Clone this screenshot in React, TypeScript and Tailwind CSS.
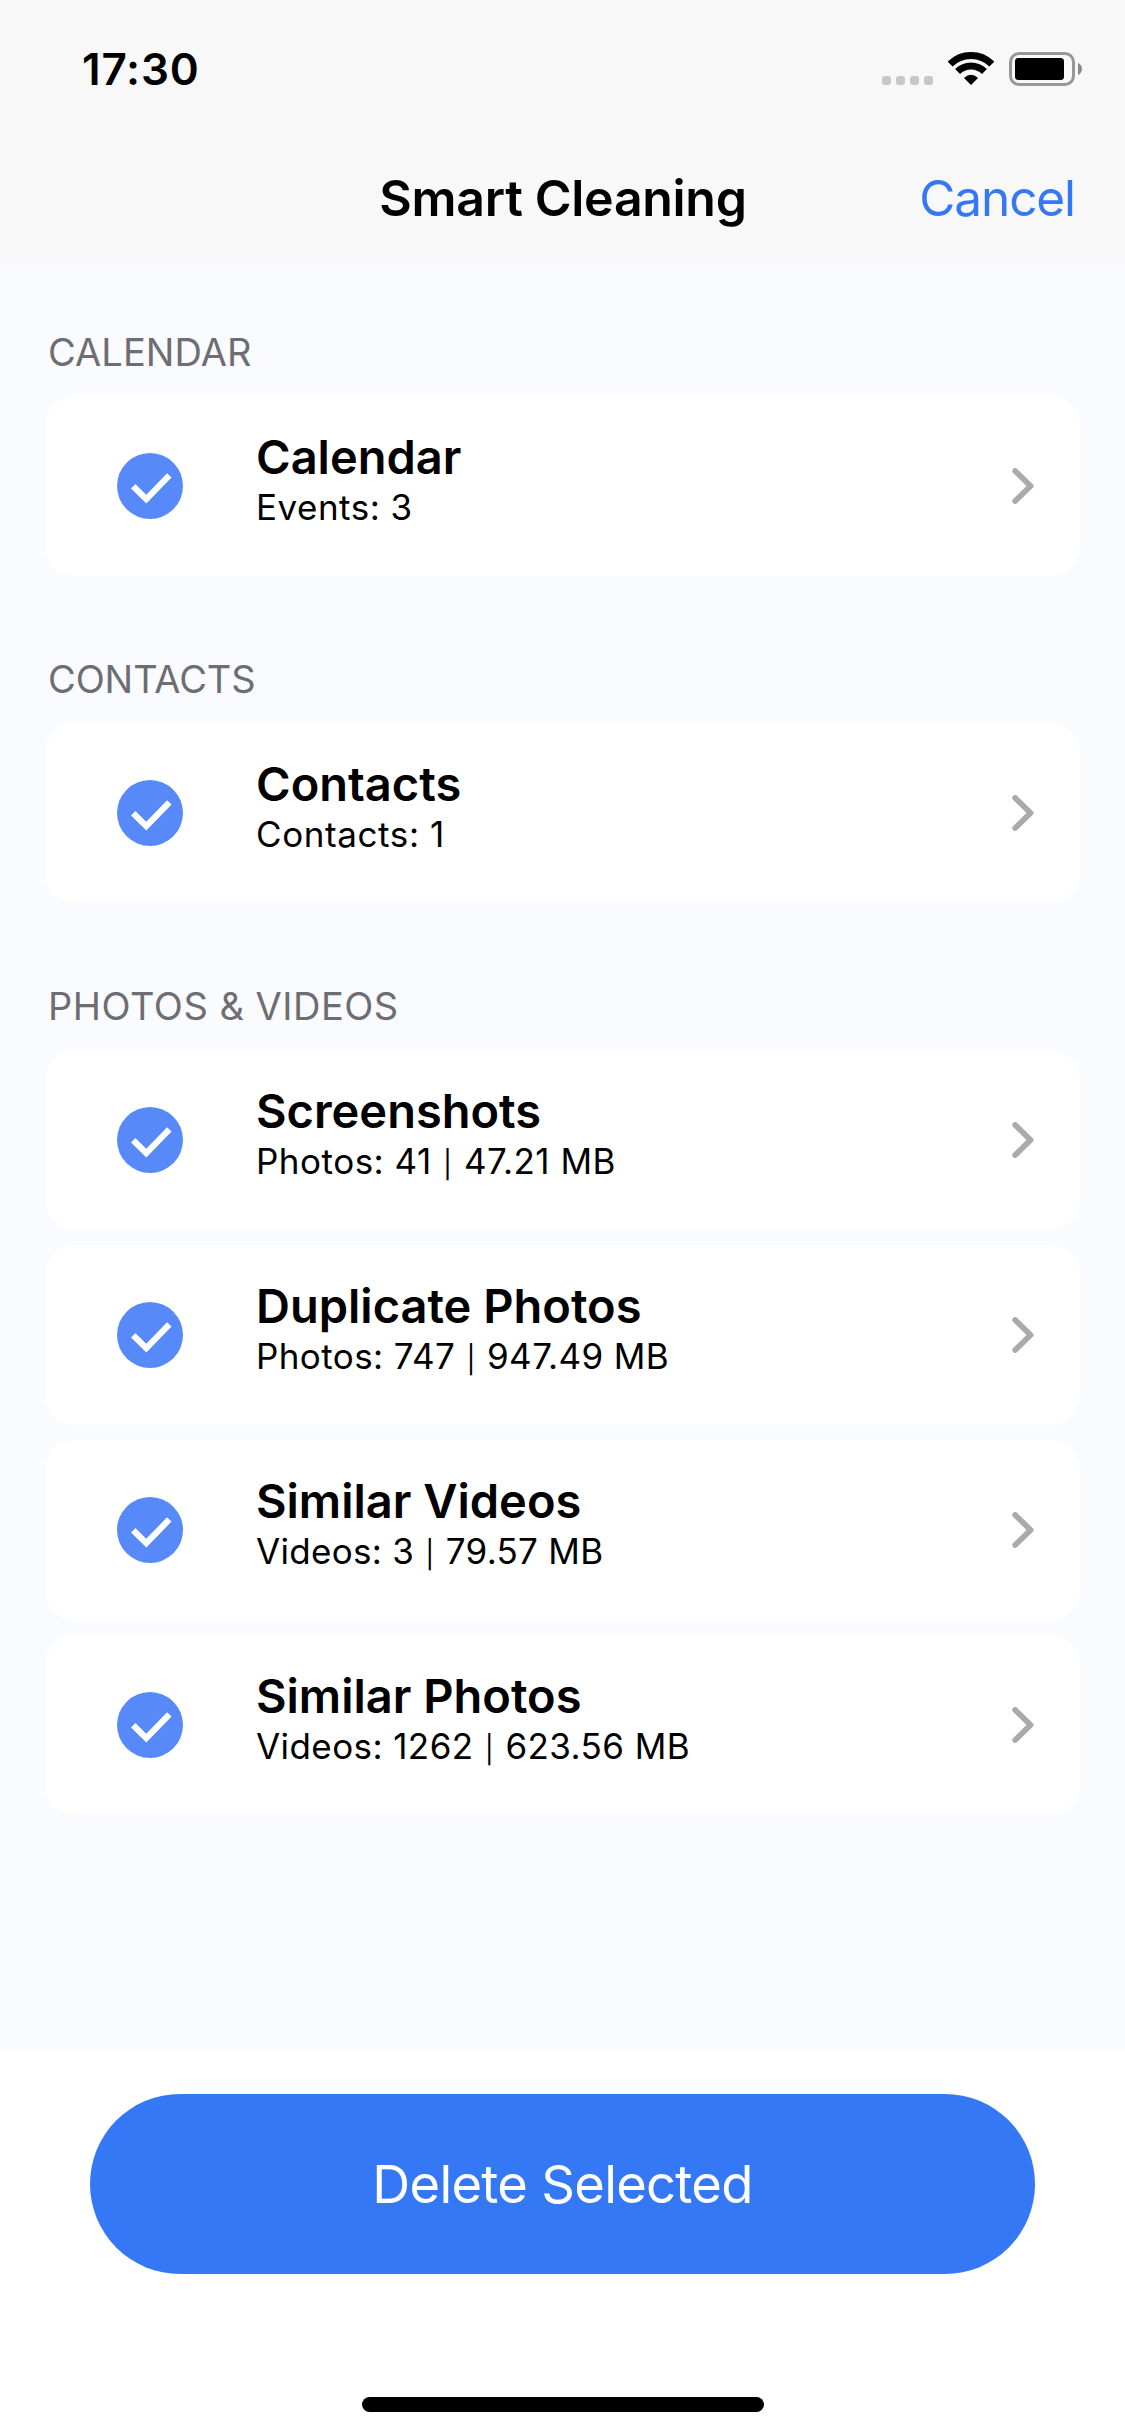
type Item = { title: string; detail: string[]; detailTracking: string };
type Section = { label: string; tracking: string; items: Item[] };

const sections: Section[] = [
  {
    label: "CALENDAR",
    tracking: "tracking-[0.07px]",
    items: [{ title: "Calendar", detail: ["Events: 3"], detailTracking: "tracking-[0.5px]" }],
  },
  {
    label: "CONTACTS",
    tracking: "tracking-[-0.1px]",
    items: [{ title: "Contacts", detail: ["Contacts: 1"], detailTracking: "tracking-[0.6px]" }],
  },
  {
    label: "PHOTOS & VIDEOS",
    tracking: "tracking-[0.5px]",
    items: [
      { title: "Screenshots", detail: ["Photos: 41", "47.21 MB"], detailTracking: "tracking-[0.5px]" },
      { title: "Duplicate Photos", detail: ["Photos: 747", "947.49 MB"], detailTracking: "tracking-[0.4px]" },
      { title: "Similar Videos", detail: ["Videos: 3", "79.57 MB"], detailTracking: "tracking-[0.3px]" },
      { title: "Similar Photos", detail: ["Videos: 1262", "623.56 MB"], detailTracking: "tracking-[0.42px]" },
    ],
  },
];

function WifiIcon() {
  return (
    <svg width="46" height="34" viewBox="0 0 46 34" fill="none">
      <path d="M2.14 12.14A29.5 29.5 0 0 1 43.86 12.14" stroke="#000" strokeWidth="7" />
      <path d="M9.56 19.56A19 19 0 0 1 36.44 19.56" stroke="#000" strokeWidth="7" />
      <path d="M23 33L16 26Q23 19.5 30 26Z" fill="#000" />
    </svg>
  );
}

function BatteryIcon() {
  return (
    <svg width="74" height="34" viewBox="0 0 74 34" fill="none">
      <rect x="1.5" y="1.5" width="63" height="31" rx="8.5" stroke="#979797" strokeWidth="3" />
      <rect x="6" y="6" width="49" height="22" rx="3.5" fill="#000" />
      <path d="M69 11C74.3 13 74.3 21 69 23Z" fill="#8a8a8a" />
    </svg>
  );
}

function CheckIcon() {
  return (
    <svg className="shrink-0" width="66" height="66" viewBox="0 0 66 66" fill="none">
      <circle cx="33" cy="33" r="33" fill="#5789f9" />
      <path d="M16.2 33.3L29.3 46.2L52.3 22.4" stroke="#fff" strokeWidth="6.2" />
    </svg>
  );
}

function ChevronIcon() {
  return (
    <svg className="shrink-0" width="22" height="36" viewBox="0 0 22 36" fill="none">
      <path
        d="M3.2 3L18.6 18L3.2 33"
        stroke="#aaaaaa"
        strokeWidth="5.8"
        strokeLinecap="round"
        strokeLinejoin="round"
      />
    </svg>
  );
}

function StatusBar() {
  return (
    <div className="flex h-[138px] items-center justify-between pl-[82px] pr-[42px]">
      <span className="text-[44px] leading-[48px] font-semibold tracking-[0.8px] text-black">17:30</span>
      <div className="flex h-[34px] items-end">
        <div className="mr-[15px] mb-px flex gap-[5px]">
          <span className="size-[9px] rounded-[3px] bg-[#c7c7c8]" />
          <span className="size-[9px] rounded-[3px] bg-[#c7c7c8]" />
          <span className="size-[9px] rounded-[3px] bg-[#c7c7c8]" />
          <span className="size-[9px] rounded-[3px] bg-[#c7c7c8]" />
        </div>
        <div className="mr-[15px]">
          <WifiIcon />
        </div>
        <BatteryIcon />
      </div>
    </div>
  );
}

function Row({ item }: { item: Item }) {
  const [count, size] = item.detail;
  return (
    <div className="flex h-[180px] items-center rounded-[30px] bg-white pr-[46px] pl-[72px]">
      <CheckIcon />
      <div className="ml-[73px] flex-1 self-start pt-[33px] text-black">
        <div className="text-[47px] leading-[56px] font-semibold">{item.title}</div>
        <div className={`text-[35px] leading-[44px] ${item.detailTracking}`}>
          {count}
          {size && (
            <>
              {" "}
              <span className="mx-px text-[27px] leading-none">|</span> {size}
            </>
          )}
        </div>
      </div>
      <ChevronIcon />
    </div>
  );
}

export default function App() {
  return (
    <div className="flex h-[2436px] w-[1125px] flex-col overflow-hidden bg-[#fafbff] font-[Inter,sans-serif]">
      <header className="h-[264px] bg-[#f8f8f9]">
        <StatusBar />
        <div className="grid h-[120px] grid-cols-[1fr_auto_1fr] items-center pr-[50px]">
          <span />
          <h1 className="ml-[51px] text-[50px] leading-[60px] font-semibold tracking-[-0.3px] text-black">
            Smart Cleaning
          </h1>
          <button className="justify-self-end text-[49.5px] leading-[60px] tracking-[-1.1px] text-[#3478f6]">
            Cancel
          </button>
        </div>
      </header>

      <main className="flex-1 px-[45px]">
        {sections.map((section) => (
          <section key={section.label} className="pt-[64px] pb-[15px]">
            <h2 className={`mb-[19px] pl-[3px] text-[38px] leading-[49px] text-[#6d6d72] ${section.tracking}`}>
              {section.label}
            </h2>
            <div className="flex flex-col gap-[15px]">
              {section.items.map((item) => (
                <Row key={item.title} item={item} />
              ))}
            </div>
          </section>
        ))}
      </main>

      <footer className="flex h-[387px] flex-col items-center bg-white pt-[45px]">
        <button className="h-[180px] w-[945px] rounded-full bg-[#3478f6] text-[52.5px] tracking-[-0.7px] text-white">
          Delete Selected
        </button>
        <div className="mt-[123px] h-[15px] w-[402px] rounded-full bg-black" />
      </footer>
    </div>
  );
}
